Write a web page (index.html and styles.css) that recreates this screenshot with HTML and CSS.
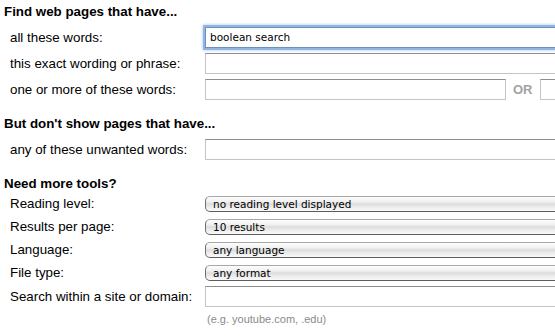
FILE: index.html
```html
<!DOCTYPE html>
<html lang="en">
<head>
    <meta charset="UTF-8">
    <meta name="viewport" content="width=device-width, initial-scale=1.0">
    <title>Advanced Search</title>
    <link rel="stylesheet" href="styles.css">
</head>
<body>

    <form class="advanced-search">
        <div class="section">
            <h3>Find web pages that have...</h3>
            <div class="row">
                <label for="as-all">all these words:</label>
                <div class="field"><input id="as-all" class="text focused" type="text" value="boolean search"></div>
            </div>
            <div class="row">
                <label for="as-exact">this exact wording or phrase:</label>
                <div class="field"><input id="as-exact" class="text" type="text"></div>
            </div>
            <div class="row">
                <label for="as-or1">one or more of these words:</label>
                <div class="field">
                    <input id="as-or1" class="text short" type="text">
                    <span class="or">OR</span>
                    <input class="text" type="text">
                </div>
            </div>
        </div>

        <div class="section">
            <h3>But don't show pages that have...</h3>
            <div class="row">
                <label for="as-not">any of these unwanted words:</label>
                <div class="field"><input id="as-not" class="text" type="text"></div>
            </div>
        </div>

        <div class="section tools">
            <h3>Need more tools?</h3>
            <div class="row select-row">
                <label for="as-level">Reading level:</label>
                <div class="field">
                    <select id="as-level"><option>no reading level displayed</option></select>
                </div>
            </div>
            <div class="row select-row">
                <label for="as-num">Results per page:</label>
                <div class="field">
                    <select id="as-num"><option>10 results</option></select>
                </div>
            </div>
            <div class="row select-row">
                <label for="as-lang">Language:</label>
                <div class="field">
                    <select id="as-lang"><option>any language</option></select>
                </div>
            </div>
            <div class="row select-row">
                <label for="as-type">File type:</label>
                <div class="field">
                    <select id="as-type"><option>any format</option></select>
                </div>
            </div>
            <div class="row domain-row">
                <label for="as-site">Search within a site or domain:</label>
                <div class="field"><input id="as-site" class="text" type="text"></div>
            </div>
            <div class="hint">(e.g. youtube.com, .edu)</div>
        </div>
    </form>

</body>
</html>
```

FILE: styles.css
```css
html {
    overflow: hidden;
}

body {
    margin: 0;
    padding: 4px 0 0 4px;
    font-family: "Liberation Sans", Arial, sans-serif;
    font-size: 13.33px;
    color: #000;
    background-color: #fff;
}

.section {
    margin-bottom: 14px;
}

.section h3 {
    margin: 0 0 4px 0;
    font-size: 13.33px;
    line-height: 16px;
    font-weight: bold;
}

.section.tools h3 {
    margin-bottom: 0;
}

.row {
    display: grid;
    grid-template-columns: 195px 1fr;
    align-items: center;
    height: 26px;
    padding-left: 6px;
}

.row label {
    white-space: nowrap;
}

.field {
    display: flex;
    align-items: center;
    white-space: nowrap;
}

.select-row {
    height: 23px;
}

.domain-row {
    height: 25px;
}

input.text {
    box-sizing: border-box;
    width: 420px;
    height: 21px;
    margin: 0;
    padding: 0 4px;
    border: 1px solid #c4c4c4;
    border-top-color: #8e8e8e;
    border-radius: 0;
    font-family: "DejaVu Sans", sans-serif;
    font-size: 10.5px;
    color: #000;
    background: #fff;
    outline: none;
}

input.text.focused {
    border-color: #6f8fbf;
    box-shadow: 0 0 0 2px #91b6e4, 0 0 3px 2px rgba(95, 145, 215, 0.55);
}

input.text.short {
    width: 301px;
    flex: none;
}

.or {
    margin: 0 7px 0 7px;
    font-size: 13px;
    font-weight: bold;
    color: #a3a3a3;
}

select {
    -webkit-appearance: none;
    appearance: none;
    box-sizing: border-box;
    width: 420px;
    height: 16px;
    margin: 0;
    padding: 0 0 0 7px;
    border: 1px solid #a8a8a8;
    border-left-color: #6e6e6e;
    border-bottom-color: #5e5e5e;
    border-radius: 5px 0 0 5px;
    font-family: "DejaVu Sans", sans-serif;
    font-size: 10.5px;
    line-height: 14px;
    color: #000;
    background: linear-gradient(to bottom, #fdfdfd 0%, #f0f0f0 35%, #dcdcdc 50%, #e8e8e8 65%, #fafafa 100%);
}

.hint {
    margin: 4px 0 0 203px;
    font-size: 11px;
    color: #8a8a8a;
}
```
